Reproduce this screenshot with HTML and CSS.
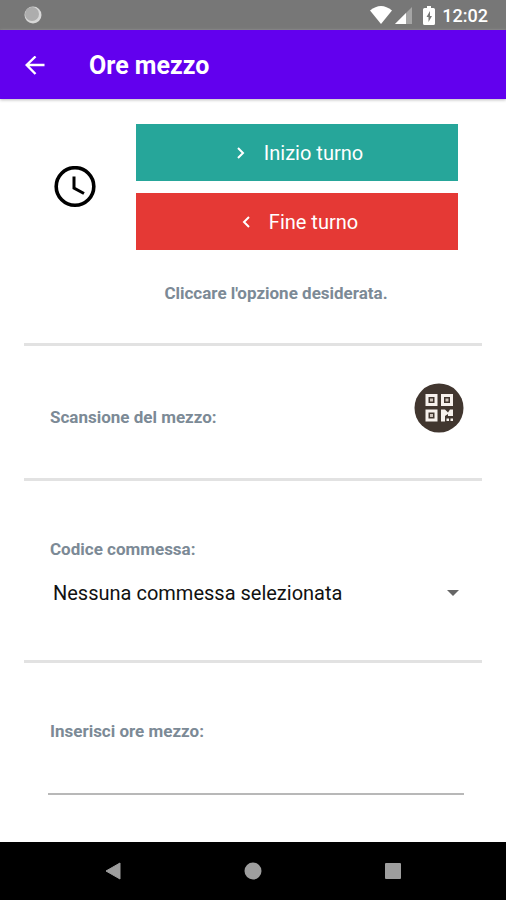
FILE: index.html
```html
<!DOCTYPE html>
<html lang="it">
<head>
<meta charset="utf-8">
<meta name="viewport" content="width=device-width, initial-scale=1">
<title>Ore mezzo</title>
<link rel="stylesheet" href="styles.css">
</head>
<body>
<div class="status">
  <svg class="status-dot" width="20" height="20" viewBox="0 0 20 20" aria-hidden="true"><circle cx="10" cy="10" r="8.5" fill="#d8d8d8"/><circle cx="9" cy="9" r="7" fill="#adadad"/></svg>
  <div class="status-icons">
    <svg width="22" height="18" viewBox="0 0 22 18" aria-hidden="true"><path d="M0 4.500Q11-4.500 22 4.500L11 18z" fill="#fff"/></svg>
    <svg width="17" height="17" viewBox="0 0 17 17" aria-hidden="true"><path d="M17 0v17H0z" fill="#a5a5a5"/><path d="M11 6v11H0z" fill="#fff"/></svg>
    <svg class="battery" width="12" height="19" viewBox="0 0 12 19" aria-hidden="true"><path d="M4 0h4v2h2.500Q12 2 12 3.500v14q0 1.500-1.500 1.500h-9Q0 19 0 17.500v-14Q0 2 1.500 2H4z" fill="#fff"/><path d="M7 5 3.500 11h2v5L9 10H7z" fill="#777"/></svg>
    <span>12:02</span>
  </div>
</div>
<header class="appbar">
  <button class="back" type="button" aria-label="Indietro"><svg width="20" height="20" viewBox="0 0 20 20" fill="none" stroke="#fff" stroke-width="2.400"><path d="M19.500 9H2M10.500 .5 1.700 9l8.800 9"/></svg></button>
  <h1>Ore mezzo</h1>
</header>
<main>
  <section class="shift">
    <svg class="clock" width="42" height="42" viewBox="0 0 42 42" fill="none" stroke="#000" aria-hidden="true"><circle cx="21" cy="20.500" r="18.800" stroke-width="3.600"/><path d="M20 10.500V22l10 5.500" stroke-width="3"/></svg>
    <div class="actions">
      <button class="action start" type="button"><svg width="8" height="12" viewBox="0 0 8 12" fill="none" stroke="#fff" stroke-width="2"><path d="m1 1 5 5-5 5"/></svg>Inizio turno</button>
      <button class="action end" type="button"><svg width="8" height="12" viewBox="0 0 8 12" fill="none" stroke="#fff" stroke-width="2"><path d="M7 1 2 6l5 5"/></svg>Fine turno</button>
    </div>
    <p class="hint">Cliccare l'opzione desiderata.</p>
  </section>
  <section class="scan">
    <span class="label">Scansione del mezzo:</span>
    <button class="qr" type="button" aria-label="Scansiona codice QR">
      <svg width="50" height="50" viewBox="0 0 50 50"><circle cx="25" cy="25" r="24.500" fill="#41362f"/><g fill="none" stroke="#f7f1ed" stroke-width="3"><path d="M13 12.500h9v9h-9zM28.500 12.500h9v9h-9zM13 28h9v9h-9z"/></g><g fill="#cfc4bc"><path d="M16 15.500h3v3h-3zM31.500 15.500h3v3h-3zM16 31h3v3h-3z"/></g><g fill="#f7f1ed"><path d="M27 26.500h4l3 3 2-3h3v6.500h-5v-2l-3 2v5.500h-4z"/><path d="M32.500 35.500h2.500v2.500h-2.500zM36.500 35.500h2.500v2.500h-2.500z"/></g></svg>
    </button>
  </section>
  <section class="job">
    <label class="label" for="job">Codice commessa:</label>
    <div class="select-wrap">
      <select id="job"><option>Nessuna commessa selezionata</option></select>
      <svg width="12" height="6" viewBox="0 0 12 6" aria-hidden="true"><path d="M0 0h12L6 6z" fill="#666"/></svg>
    </div>
  </section>
  <section class="hours">
    <label class="label" for="hours">Inserisci ore mezzo:</label>
    <input id="hours" type="text" inputmode="decimal">
  </section>
</main>
<nav class="navbar" aria-label="Sistema">
  <button type="button" aria-label="Indietro"><svg width="18" height="18" viewBox="0 0 18 18"><path d="M16 1v16L2 9z" fill="#9e9e9e" stroke="#9e9e9e" stroke-linejoin="round"/></svg></button>
  <button type="button" aria-label="Home"><svg width="18" height="18" viewBox="0 0 18 18"><circle cx="9" cy="9" r="8.500" fill="#9e9e9e"/></svg></button>
  <button type="button" aria-label="Recenti"><svg width="18" height="18" viewBox="0 0 18 18"><rect x="1" y="1" width="16" height="16" rx="1" fill="#9e9e9e"/></svg></button>
</nav>
</body>
</html>
```
FILE: styles.css
```css
* { box-sizing: border-box; }
body {
  margin: 0;
  min-height: 100vh;
  display: flex;
  flex-direction: column;
  background: #fff;
  color: #111;
  font-family: Roboto, "Liberation Sans", sans-serif;
}
button, select, input { font: inherit; border: 0; padding: 0; background: none; }
button { cursor: pointer; }
svg { display: block; flex: none; }

.status {
  height: 30px;
  padding: 0 18px 0 23px;
  display: flex;
  align-items: center;
  justify-content: space-between;
  background: #777;
  color: #fff;
  font-size: 18px;
  font-weight: 500;
}
.status-icons { display: flex; align-items: center; gap: 3px; }
.battery { margin: 0 4px 0 8px; }

.appbar {
  height: 69px;
  padding: 2px 25px 0;
  display: flex;
  align-items: center;
  gap: 44px;
  background: #6200ee;
  box-shadow: 0 1px 3px #bbb;
  color: #fff;
}
h1 { margin: 0; font-size: 25px; font-weight: 700; }

main { flex: 1; padding: 0 24px; }
section { padding: 0 24px 0 26px; border-bottom: 3px solid #e2e2e2; }
.label, .hint { color: #7c8a96; font-size: 17px; line-height: 20px; font-weight: 700; }

.shift {
  display: grid;
  grid-template-columns: 50px 1fr;
  column-gap: 36px;
  padding-top: 25px;
  padding-bottom: 40px;
  align-items: center;
}
.clock { justify-self: center; }
.actions { display: grid; gap: 12px; }
.action {
  height: 57px;
  padding-left: 6px;
  display: flex;
  align-items: center;
  justify-content: center;
  gap: 19px;
  color: #fff;
  font-size: 20px;
}
.start { background: #26a69a; }
.end { background: #e53935; }
.hint { grid-column: 1 / -1; margin: 33px 0 0; text-align: center; padding-left: 44px; }

.scan { display: flex; justify-content: space-between; padding: 37px 18px 45px 26px; }
.scan .label { padding-top: 24px; }
.qr { border-radius: 50%; }

.job { padding-top: 58px; padding-bottom: 43px; }
.job .label, .hours .label { display: block; }
.select-wrap { display: grid; align-items: center; margin-top: 10px; }
.select-wrap > * { grid-area: 1 / 1; }
.select-wrap svg { justify-self: end; margin-right: -1px; pointer-events: none; }
select {
  appearance: none;
  width: 100%;
  height: 48px;
  padding: 0 24px 0 3px;
  color: #111;
  font-size: 20px;
}

.hours { padding: 58px 18px 47px 24px; border-bottom: 0; }
.hours .label { padding-left: 2px; }
#hours { display: block; width: 100%; height: 54px; border-bottom: 2px solid #b8b8b8; border-radius: 0; font-size: 20px; }

.navbar {
  height: 58px;
  display: flex;
  justify-content: center;
  align-items: center;
  gap: 122px;
  background: #000;
}
```
